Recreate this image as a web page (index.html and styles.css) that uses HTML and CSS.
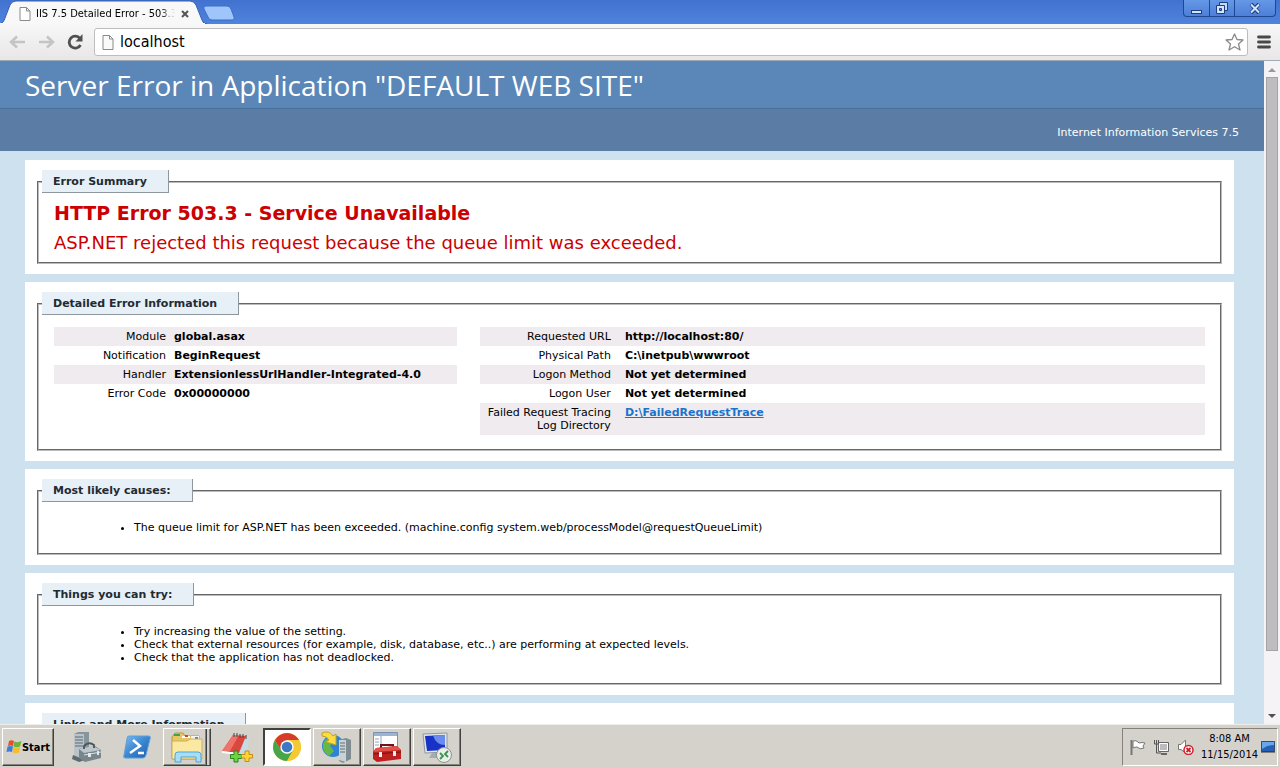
FILE: index.html
```html
<!DOCTYPE html>
<html lang="en">
<head>
<meta charset="utf-8">
<title>IIS 7.5 Detailed Error - 503.3</title>
<link rel="stylesheet" href="styles.css">
</head>
<body>
<div class="tabstrip">
  <div class="tabs">
    <svg class="tab-shape" width="240" height="24" viewBox="0 0 240 24" aria-hidden="true">
      <path d="M0 24 C3 23 4 21 5 18 L10 5 Q12 1 16 1 H190 Q194 1 196 5 L202 20 Q203 24 207 24Z" fill="#f8f8f8" stroke="#3560b4"/>
      <path d="M207 6 H227 Q230 6 231 9 L234 17 Q235 20 231 20 H212 Q209 20 208 17 L204 9 Q203 6 207 6Z" fill="#9fc6fa" stroke="#3d6dc8"/>
      <path d="M0 24H205" stroke="#f8f8f8" stroke-width="2"/>
    </svg>
    <svg class="page-icon" width="12" height="14" viewBox="0 0 12 14" aria-hidden="true"><path d="M1 .5H7.5L11 4V13.5H1ZM7.500 .5V4H11" fill="#fff" stroke="#8a8a8a"/></svg>
    <span class="tab-title">IIS 7.5 Detailed Error - 503.3</span>
    <button class="tab-close" aria-label="Close tab"><svg width="8" height="8" viewBox="0 0 8 8"><path d="M1 1L7 7M7 1L1 7" stroke="#555" stroke-width="2"/></svg></button>
  </div>
  <div class="window-buttons">
    <button class="min" aria-label="Minimize"><svg width="13" height="13" viewBox="0 0 13 13"><rect x="1.500" y="8.500" width="10" height="3" fill="#d4e4fc" stroke="#1d3f7f"/></svg></button>
    <button class="restore" aria-label="Restore"><svg width="14" height="14" viewBox="0 0 14 14"><path d="M4.500 1.500H12.500V9.500H4.500Z" fill="#c4daf8" stroke="#1d3f7f"/><path d="M1.500 4.500H9.500V12.500H1.500Z" fill="#d4e4fc" stroke="#1d3f7f"/><path d="M4.500 7.500H6.500V9.500H4.500Z" fill="#5b8ce0" stroke="#1d3f7f"/></svg></button>
    <button class="close" aria-label="Close"><svg width="12" height="11" viewBox="0 0 12 11"><path d="M2 1L10 10M10 1L2 10" stroke="#1d3f7f" stroke-width="4"/><path d="M2 1.500L10 9.500M10 1.500L2 9.500" stroke="#d4e4fc" stroke-width="2"/></svg></button>
  </div>
</div>

<div class="toolbar">
  <button aria-label="Back"><svg width="17" height="14" viewBox="0 0 17 14"><path d="M16 7H3M8 1.500L2 7L8 12.500" fill="none" stroke="#c4c4c4" stroke-width="2.500"/></svg></button>
  <button aria-label="Forward"><svg width="17" height="14" viewBox="0 0 17 14"><path d="M1 7H14M9 1.500L15 7L9 12.500" fill="none" stroke="#c4c4c4" stroke-width="2.500"/></svg></button>
  <button aria-label="Reload"><svg width="17" height="16" viewBox="0 0 17 16"><path d="M13 4.500A6 6 0 1 0 13.500 11" fill="none" stroke="#505050" stroke-width="2.800"/><path d="M15.500 0V7.500H8.500Z" fill="#505050"/></svg></button>
  <div class="address">
    <svg width="12" height="15" viewBox="0 0 12 15" aria-hidden="true"><path d="M1 .5H7.500L11 4V14.500H1ZM7.500 .5V4H11" fill="#fafafa" stroke="#8a8a8a"/></svg>
    <input type="text" value="localhost" aria-label="Address">
    <button aria-label="Bookmark this page"><svg width="19" height="18" viewBox="0 0 19 18"><path d="M9.500 1L12 6.500L18 7L13.500 11L15 17L9.500 13.700L4 17L5.500 11L1 7L7 6.500Z" fill="#fff" stroke="#8a8a8a" stroke-width="1.300" stroke-linejoin="round"/></svg></button>
  </div>
  <button aria-label="Menu"><svg width="14" height="14" viewBox="0 0 14 14"><path d="M1.500 2H12.500M1.500 7H12.500M1.500 12H12.500" stroke="#484848" stroke-width="2.800" stroke-linecap="round"/></svg></button>
</div>

<div class="viewport">
  <main class="page">
    <header class="page-header">
      <h1>Server Error in Application "DEFAULT WEB SITE"</h1>
      <p>Internet Information Services 7.5</p>
    </header>
    <div class="content">
      <section class="box">
        <fieldset class="summary">
          <legend>Error Summary</legend>
          <h2>HTTP Error 503.3 - Service Unavailable</h2>
          <h3>ASP.NET rejected this request because the queue limit was exceeded.</h3>
        </fieldset>
      </section>
      <section class="box">
        <fieldset class="details">
          <legend>Detailed Error Information</legend>
          <div class="tables">
            <table class="left">
              <tr class="alt"><th scope="row">Module</th><td>global.asax</td></tr>
              <tr><th scope="row">Notification</th><td>BeginRequest</td></tr>
              <tr class="alt"><th scope="row">Handler</th><td>ExtensionlessUrlHandler-Integrated-4.0</td></tr>
              <tr><th scope="row">Error Code</th><td>0x00000000</td></tr>
            </table>
            <table class="right">
              <tr class="alt"><th scope="row">Requested URL</th><td>http://localhost:80/</td></tr>
              <tr><th scope="row">Physical Path</th><td>C:\inetpub\wwwroot</td></tr>
              <tr class="alt"><th scope="row">Logon Method</th><td>Not yet determined</td></tr>
              <tr><th scope="row">Logon User</th><td>Not yet determined</td></tr>
              <tr class="alt"><th scope="row">Failed Request Tracing<br>Log Directory</th><td><a href="#">D:\FailedRequestTrace</a></td></tr>
            </table>
          </div>
        </fieldset>
      </section>
      <section class="box">
        <fieldset>
          <legend>Most likely causes:</legend>
          <ul><li>The queue limit for ASP.NET has been exceeded. (machine.config system.web/processModel@requestQueueLimit)</li></ul>
        </fieldset>
      </section>
      <section class="box">
        <fieldset>
          <legend>Things you can try:</legend>
          <ul>
            <li>Try increasing the value of the setting.</li>
            <li>Check that external resources (for example, disk, database, etc..) are performing at expected levels.</li>
            <li>Check that the application has not deadlocked.</li>
          </ul>
        </fieldset>
      </section>
      <section class="box">
        <fieldset>
          <legend>Links and More Information</legend>
        </fieldset>
      </section>
    </div>
  </main>
  <div class="scrollbar" aria-hidden="true">
    <svg width="16" height="16" viewBox="0 0 16 16"><path d="M4 11L8 7L12 11Z" fill="#9a9a9a"/></svg>
    <div class="track"><div class="thumb"></div></div>
    <svg width="16" height="16" viewBox="0 0 16 16"><path d="M4 6L8 10L12 6Z" fill="#505050"/></svg>
  </div>
</div>

<footer class="taskbar">
  <button class="start raised">
    <svg width="16" height="16" viewBox="0 0 16 16"><path d="M3 2Q5.500 .5 8 2L7 7Q4.500 5.800 2 7Z" fill="#e8502c"/><path d="M8.500 2.500Q12 4 15.500 2L14 7.500Q11 9 7.500 7.500Z" fill="#6cb33e"/><path d="M1.500 7.500Q4.500 6.300 7 7.500L6 13Q3.500 11.800 .5 13Z" fill="#3c7fd6"/><path d="M7.500 8Q11 9.500 14 8L13 13.500Q10 15 6.500 13.500Z" fill="#f6bd28"/></svg>
    <span>Start</span>
  </button>
  <div class="tasks">
    <button aria-label="Server Manager">
      <svg width="32" height="32" viewBox="0 0 32 32"><path d="M3 3L7 1H18V26L14 29H3Z" fill="#87959c"/><path d="M3 3H13V29H3Z" fill="#b9c3c8"/><path d="M4 6H12M4 9H12M4 12H12M4 15H12" stroke="#5f6d74" stroke-width="1.200"/><path d="M2 24L14 29L8 31L1 28Z" fill="#5e6a70"/><path d="M8 18L24 15L30 19V27L14 31L8 27Z" fill="#77858c"/><path d="M8 18L22 15L30 19L13 22Z" fill="#bcc6cb"/><path d="M13 18V15Q18 10 23 14V17" fill="none" stroke="#4a565c" stroke-width="1.800"/><path d="M13 24L30 21" stroke="#dce3e6"/><rect x="17" y="22" width="3" height="4" fill="#e2e8eb"/><rect x="26" y="20" width="2" height="4" fill="#e2e8eb"/></svg>
    </button>
    <button aria-label="Windows PowerShell">
      <svg width="32" height="32" viewBox="0 0 32 32"><defs><linearGradient id="ps" x2="1" y2="1"><stop stop-color="#7ebcf0"/><stop offset=".5" stop-color="#3a86cf"/><stop offset="1" stop-color="#1e5fae"/></linearGradient></defs><path d="M8 5H28Q30 5 29 8L25 24Q24 27 22 27H4Q2 27 3 24L6 8Q6 5 8 5Z" fill="url(#ps)" stroke="#5aa0dc"/><path d="M12 9L19 15L9 22M17 22H23" fill="none" stroke="#fff" stroke-width="2.500"/></svg>
    </button>
    <button class="raised stacked" aria-label="Windows Explorer">
      <svg width="34" height="32" viewBox="0 0 34 32"><path d="M2 6L5 2H13L15 5H29V28H2Z" fill="#e7c761" stroke="#b99739"/><path d="M4 3H10V5H4Z" fill="#43a047"/><path d="M12 5H20V7H12Z" fill="#fff"/><path d="M15 4H18V6H15Z" fill="#d14430"/><path d="M21 5H29V9H21Z" fill="#f5f5f5"/><path d="M25 6H28V8H25Z" fill="#3b8ad0"/><path d="M2 10H17L20 8H32V28H2Z" fill="#fae8a3" stroke="#ceb05a"/><path d="M5 31V24Q5 21 8 21H28Q31 21 31 24V31H26V26H11V31Z" fill="#a9dcf5" stroke="#4ba6d7"/></svg>
    </button>
    <button aria-label="Notes">
      <svg width="32" height="32" viewBox="0 0 32 32"><path d="M22 3L28 8L26 21L18 23Z" fill="#c4dce6"/><path d="M12 4L25 5L18 22L1 20Z" fill="#d9473f"/><path d="M12 4H18L9 20L1 20Z" fill="#ee746b"/><path d="M1 20L18 22L18 24L1 22Z" fill="#fff"/><path d="M13 2V6M16 2V6M19 3V7M22 3V7M25 4V8" stroke="#444"/><path d="M13 20H17V23.500H20.500V27.500H17V31H13V27.500H9.500V23.500H13Z" fill="#6ed33e" stroke="#26851e"/><path d="M24 20H28V23.500H31.500V27H28V30.500H24V27H20.500V23.500H24Z" fill="#ffd535" stroke="#c68c12"/></svg>
    </button>
    <button class="active" aria-label="Google Chrome">
      <svg width="30" height="30" viewBox="0 0 30 30"><circle cx="15" cy="15" r="14" fill="#f5c934"/><path d="M2.900 8A14 14 0 0 1 27.100 8H15L9 18.500Z" fill="#d83a2c"/><path d="M2.900 8A14 14 0 0 0 15 29L21 18.500L9 18.500Z" fill="#45a64b"/><path d="M27.100 8A14 14 0 0 1 15 29L21 18.500L15 8Z" fill="#f5c934"/><circle cx="15" cy="15" r="6.700" fill="#fff"/><circle cx="15" cy="15" r="5.300" fill="#3c79c5"/></svg>
    </button>
    <button class="raised" aria-label="IIS Manager">
      <svg width="32" height="32" viewBox="0 0 32 32"><circle cx="12" cy="15" r="11" fill="#2f83d3"/><path d="M4 9Q9 5 12 10L9 15L13 20L8 25Q1 21 2 13Z" fill="#64b846"/><path d="M18 9L25 7L30 9V28L22 32L18 30Z" fill="#7f8c92"/><path d="M18 9H25V31L18 29Z" fill="#c9d2d5"/><path d="M19 12H24M19 15H24M19 18H24M19 21H24" stroke="#647177"/><path d="M1 2Q8 -1 12 5L15 3V14L5 11L8 9Q6 5 1 5Z" fill="#ffdc3f" stroke="#c3a223"/></svg>
    </button>
    <button class="raised" aria-label="Administrative tools">
      <svg width="32" height="32" viewBox="0 0 32 32"><path d="M2.500 1.500H26.500V25.500H2.500Z" fill="#fff" stroke="#7d90ad"/><path d="M3 2H26V5H3Z" fill="#9cb3d6"/><path d="M10 5V18M4 8H8M4 11H8M4 14H8" stroke="#8ba3c4"/><path d="M10 18V14H22V18" fill="none" stroke="#6f1515" stroke-width="2"/><path d="M5 17L26 15L30 19V28L6 31L2 28V21Z" fill="#bf2020"/><path d="M5 17L26 15L30 19L3 21Z" fill="#e25248"/><path d="M3 23L30 21" stroke="#761111"/><path d="M8 21H11V26H8ZM22 20H25V25H22Z" fill="#eeeeee"/></svg>
    </button>
    <button class="raised" aria-label="Remote Desktop">
      <svg width="32" height="32" viewBox="0 0 32 32"><path d="M2 3L26 2V21L4 22Z" fill="#e0e5e9" stroke="#8e989e"/><path d="M4 5L24 4V19L6 20Z" fill="#1732c4"/><path d="M12 4.500L24 4V14Q15 14 12 4.500Z" fill="#6b8bef"/><path d="M11 22H17L19 27H8Z" fill="#a4acb1"/><circle cx="23" cy="24" r="7.500" fill="#e9eeea" stroke="#8b9690"/><path d="M19 22L22 25L19 28M27 20L24 23L27 26" fill="none" stroke="#37924a" stroke-width="1.800"/></svg>
    </button>
  </div>
  <div class="tray">
    <svg width="17" height="16" viewBox="0 0 17 16" aria-hidden="true"><path d="M2.500 1V16" stroke="#777" stroke-width="2"/><path d="M4 2Q7 1 9 3L10 4Q13 3 16 4L14 7L15 9Q11 11 8 8Q6 8 4 9Z" fill="#fff" stroke="#777"/></svg>
    <svg width="17" height="16" viewBox="0 0 17 16" aria-hidden="true"><path d="M5.500 3.500H15.500V12.500H5.500Z" fill="#bbb" stroke="#666"/><path d="M6.500 4.500H14.500V11.500H6.500Z" fill="none" stroke="#fff"/><path d="M8 15H14" stroke="#666" stroke-width="2"/><path d="M1.500 1V5H5.500V1M3.500 1V14H8" fill="none" stroke="#555"/></svg>
    <svg width="17" height="16" viewBox="0 0 17 16" aria-hidden="true"><path d="M1.500 5.500H4L8.500 1V14L4 10.500H1.500Z" fill="#fff" stroke="#777"/><circle cx="11.500" cy="11" r="4.500" fill="#fff" stroke="#d31e2b" stroke-width="1.500"/><path d="M9.500 9L13.500 13M13.500 9L9.500 13" stroke="#d31e2b" stroke-width="1.800"/></svg>
    <div class="clock"><span>8:08 AM</span><span>11/15/2014</span></div>
    <svg width="14" height="12" viewBox="0 0 14 12" aria-hidden="true"><path d="M.5 .5H13.500V10.500H.5Z" fill="#2560b8" stroke="#344d70"/><path d="M1 1H13V4Q6 4 1 8Z" fill="#69a7eb"/><path d="M0 11H14" stroke="#333"/></svg>
  </div>
</footer>
</body>
</html>
```
FILE: styles.css
```css
* { box-sizing: border-box; }

body {
  margin: 0;
  height: 100vh;
  display: flex;
  flex-direction: column;
  overflow: hidden;
  font: 11px/13px "DejaVu Sans", Verdana, sans-serif;
  color: #000;
}

button {
  display: flex;
  align-items: center;
  justify-content: center;
  padding: 0;
  border: 0;
  background: none;
  font: inherit;
  color: inherit;
}

svg { display: block; flex: none; }

/* Browser frame */
.tabstrip {
  flex: none;
  height: 24px;
  display: flex;
  justify-content: space-between;
  background: linear-gradient(#4272cf, #4f83dd);
}
.tabs {
  position: relative;
  width: 240px;
  display: flex;
  align-items: center;
  padding: 3px 0 0 19px;
}
.tab-shape { position: absolute; left: 0; top: 0; }
.page-icon { position: relative; }
.tab-title {
  position: relative;
  width: 139px;
  margin: 0 6px 0 5px;
  overflow: hidden;
  white-space: nowrap;
  font-family: "DejaVu Sans Condensed", Tahoma, sans-serif;
  mask-image: linear-gradient(to right, #000 124px, transparent 139px);
}
.tab-close { position: relative; }

.window-buttons {
  display: flex;
  height: 17px;
  margin-right: 4px;
  border: 1px solid #1f4892;
  border-top: 0;
  border-radius: 0 0 4px 4px;
  background: linear-gradient(#6698e8, #4d7fd8);
}
.window-buttons button { width: 25px; }
.window-buttons .close { width: 41px; }
.window-buttons button + button { border-left: 1px solid #1f4892; }

.toolbar {
  flex: none;
  height: 37px;
  display: flex;
  align-items: center;
  gap: 12px;
  padding: 0 9px;
  background: linear-gradient(#f8f8f8, #e8e6e6);
  border-bottom: 1px solid #9dabb8;
}
.address {
  flex: 1;
  height: 28px;
  margin-left: -2px;
  margin-right: -3px;
  display: flex;
  align-items: center;
  padding: 0 3px 0 7px;
  background: #fff;
  border: 1px solid #bdbdbd;
  border-radius: 3px;
}
.address input {
  flex: 1;
  min-width: 0;
  padding: 0 6px;
  border: 0;
  outline: 0;
  background: none;
  font: 16px/20px "DejaVu Sans Condensed", Tahoma, sans-serif;
}

/* Page */
.viewport {
  flex: 1;
  min-height: 0;
  display: flex;
  background: #cde1ee;
}
.page { flex: 1; min-width: 0; overflow: hidden; }

.page-header { color: #fff; }
.page-header h1 {
  margin: 0;
  padding: 9px 25px 8px;
  background: #5a87b8;
  border-bottom: 1px solid #47709a;
  font: 500 28px/30px "Open Sans", "Trebuchet MS", sans-serif;
}
.page-header p {
  margin: 0;
  padding: 17px 25px 12px;
  background: #5b7da5;
  text-align: right;
}

.content {
  display: flex;
  flex-direction: column;
  gap: 8px;
  padding: 9px 30px 9px 25px;
}
.box { padding: 10px 12px; background: #fff; }

fieldset {
  min-width: 0;
  margin: 0;
  padding: 0 15px;
  border: 2px groove #bbb;
}
legend {
  margin-left: -12px;
  padding: 5px 21px 4px 11px;
  background: #e7f0f7;
  border-right: 1px solid #8f979e;
  border-bottom: 1px solid #8f979e;
  font-weight: bold;
  color: #222a32;
}
h2, h3 { margin: 0; color: #c00; }
h2 { padding-top: 8px; font-size: 19px; line-height: 24px; }
h3 { padding: 6px 0 7px; font-size: 18px; line-height: 24px; font-weight: normal; }

.tables {
  display: flex;
  align-items: flex-start;
  justify-content: space-between;
  padding: 12px 0 14px;
}
table { border-collapse: collapse; table-layout: fixed; }
.left { width: 35%; }
.right { width: 63%; }
th, td { padding: 3px 4px; vertical-align: top; }
th { width: 116px; text-align: right; font-weight: normal; white-space: nowrap; }
td { text-align: left; font-weight: bold; white-space: nowrap; }
.right th { width: 135px; }
.right td { padding-left: 10px; }
.alt { background: #efebee; }
a { color: #1a73cc; }

ul { margin: 0; padding: 19px 0 19px 80px; }

.scrollbar {
  flex: none;
  width: 16px;
  display: flex;
  flex-direction: column;
  background: #f5f3f5;
}
.track { flex: 1; padding: 0 2px; }
.thumb { height: 91%; background: #bebcbe; border: 1px solid #a5a3a5; }

/* Taskbar */
.taskbar {
  flex: none;
  height: 44px;
  display: flex;
  align-items: center;
  padding: 3px 2px 2px;
  background: #d5d1cb;
  border-top: 1px solid #eeeeea;
}
.raised {
  border: 1px solid;
  border-color: #fff #404040 #404040 #fff;
  box-shadow: inset -1px -1px #85817b;
}
.start {
  width: 52px;
  height: 38px;
  font: bold 11px/13px "DejaVu Sans Condensed", Tahoma, sans-serif;
}
.tasks { flex: 1; display: flex; gap: 2px; margin-left: 9px; }
.tasks button { width: 48px; height: 38px; }
.tasks .stacked { box-shadow: inset -1px 0 #85817b, inset -3px 0 #d5d1cb, inset -4px 0 #404040, inset -5px -1px #85817b; }
.tasks .active {
  background: #fff;
  border: 2px solid;
  border-color: #404040 #fff #fff #404040;
}
.tray {
  height: 38px;
  display: flex;
  align-items: center;
  gap: 7px;
  padding: 0 2px 0 6px;
  border: 1px solid;
  border-color: #85817b #fff #fff #85817b;
}
.clock {
  display: flex;
  flex-direction: column;
  align-items: center;
  margin: 0 -4px 0 0;
  font: 11px/16px "DejaVu Sans Condensed", Tahoma, sans-serif;
}
```
